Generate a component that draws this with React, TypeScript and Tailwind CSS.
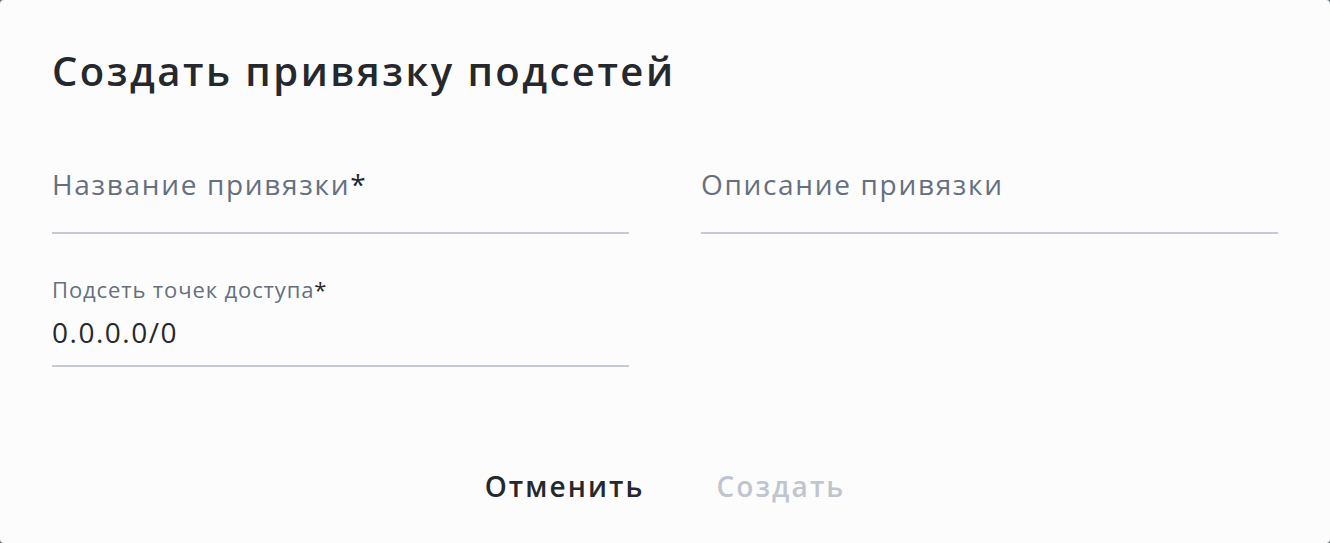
import React from 'react';

export default function App() {
  return (
    <div className="w-[1330px] h-[543px] bg-[#6b7280]" style={{ fontFamily: '"Open Sans", "Noto Sans", sans-serif' }}>
      <div className="h-full bg-[#fcfcfc] rounded-[4px] px-[52px] pt-[43px] flex flex-col">
        <h1 className="text-[40px] leading-[56px] font-semibold tracking-[0.062em] text-[#25282d]">
          Создать привязку подсетей
        </h1>

        <div className="grid grid-cols-2 gap-x-[72px] mt-[65px]">
          <div className="border-b-2 border-[#c5cad3] h-[70px]">
            <span className="text-[28px] leading-[40px] tracking-[0.06em] text-[#65707f]">
              Название привязки<span className="text-[#25282d]">*</span>
            </span>
          </div>
          <div className="border-b-2 border-[#c5cad3] h-[70px]">
            <span className="text-[28px] leading-[40px] tracking-[0.06em] text-[#65707f]">Описание привязки</span>
          </div>
        </div>

        <div className="grid grid-cols-2 gap-x-[72px] mt-[40px]">
          <div className="border-b-2 border-[#c5cad3] pb-[13px]">
            <div className="text-[22px] leading-[30px] tracking-[0.04em] text-[#65707f]">
              Подсеть точек доступа<span className="text-[#25282d]">*</span>
            </div>
            <div className="mt-[8px] text-[28px] leading-[40px] tracking-[0.054em] text-[#25282d]">0.0.0.0/0</div>
          </div>
        </div>

        <div className="flex justify-center gap-[72px] mt-[99px]">
          <button className="text-[28px] leading-[40px] font-semibold tracking-[0.075em] text-[#25282d]">Отменить</button>
          <button className="text-[28px] leading-[40px] font-semibold tracking-[0.075em] text-[#bfc5cf]">Создать</button>
        </div>
      </div>
    </div>
  );
}
